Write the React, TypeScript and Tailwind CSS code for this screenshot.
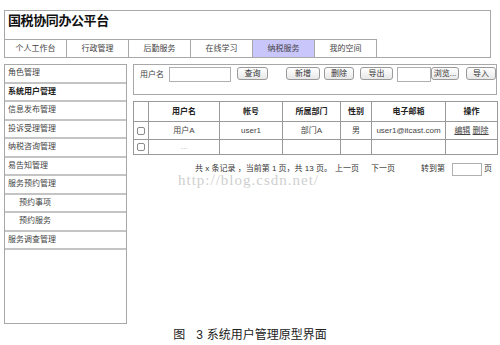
import React from "react";

const tabs = ["个人工作台", "行政管理", "后勤服务", "在线学习", "纳税服务", "我的空间"];
const side: { t: string; indent?: boolean; bold?: boolean }[] = [
  { t: "角色管理" },
  { t: "系统用户管理", bold: true },
  { t: "信息发布管理" },
  { t: "投诉受理管理" },
  { t: "纳税咨询管理" },
  { t: "易告知管理" },
  { t: "服务预约管理" },
  { t: "预约事项", indent: true },
  { t: "预约服务", indent: true },
  { t: "服务调查管理" },
];

function Btn({ children, w }: { children: React.ReactNode; w: string }) {
  return (
    <div
      className={`${w} h-[13px] flex items-center justify-center rounded-[3px] border border-[#9a9a9a] bg-gradient-to-b from-white to-[#e8e8e8] text-[8px] leading-none text-[#333]`}
    >
      {children}
    </div>
  );
}

function Check() {
  return <div className="ml-[3px] w-[8px] h-[8px] rounded-[2px] border border-[#8a8a8a] bg-white" />;
}

export default function App() {
  return (
    <div
      className="relative w-[500px] h-[345px] bg-white text-[#333] overflow-hidden"
      style={{ fontFamily: '"Liberation Sans", "Noto Sans CJK SC", sans-serif' }}
    >
      {/* header */}
      <div className="ml-[4px] mt-[10px] w-[487px] h-[48px] border border-[#a8a8a8] flex flex-col justify-between">
        <div className="pl-[3px] pt-[1px] text-[13px] font-bold leading-[18px] text-[#111] tracking-[-0.4px]">
          国税协同办公平台
        </div>
        <div className="flex">
          {tabs.map((t, i) => (
            <div
              key={t}
              className={`w-[62px] h-[18px] border-t border-r border-[#a8a8a8] flex items-center justify-center text-[8px] text-[#444] ${
                i === 4 ? "bg-[#c9c6fb]" : "bg-white"
              }`}
            >
              {t}
            </div>
          ))}
        </div>
      </div>

      {/* main */}
      <div className="flex items-start mt-[6px] ml-[4px] gap-[6px]">
        {/* sidebar */}
        <div className="w-[123px] h-[260px] border border-[#a8a8a8] flex flex-col">
          {side.map((s) => (
            <div
              key={s.t}
              className={`h-[18.5px] flex items-center border-b-2 border-[#c4c4c4] text-[8px] ${
                s.indent ? "pl-[14px]" : "pl-[3px]"
              } ${s.bold ? "font-bold text-[#222]" : "text-[#444]"}`}
            >
              {s.t}
            </div>
          ))}
        </div>

        {/* right */}
        <div className="w-[364px]">
          <div className="h-[31px] border border-[#a8a8a8] flex items-start pt-[2px] pl-[6px] text-[8px]">
            <div className="h-[15px] flex items-center text-[#444]">用户名</div>
            <div className="ml-[5px] w-[62px] h-[15px] border border-[#b0b0b0] bg-white" />
            <div className="ml-[6px]">
              <Btn w="w-[31px]">查询</Btn>
            </div>
            <div className="ml-[18px]">
              <Btn w="w-[34px]">新增</Btn>
            </div>
            <div className="ml-[4px]">
              <Btn w="w-[30px]">删除</Btn>
            </div>
            <div className="ml-[6px]">
              <Btn w="w-[33px]">导出</Btn>
            </div>
            <div className="ml-[4px] flex">
              <div className="w-[34px] h-[15px] border border-[#b0b0b0] bg-white" />
              <Btn w="w-[28px]">浏览...</Btn>
            </div>
            <div className="ml-[7px]">
              <Btn w="w-[30px]">导入</Btn>
            </div>
          </div>

          <table className="mt-[6px] w-[364px] table-fixed border-collapse text-[8px] text-[#444]">
            <colgroup>
              <col className="w-[15px]" />
              <col className="w-[71px]" />
              <col className="w-[63px]" />
              <col className="w-[58px]" />
              <col className="w-[31px]" />
              <col className="w-[74px]" />
              <col className="w-[52px]" />
            </colgroup>
            <thead>
              <tr className="h-[20px] font-bold text-[#222]">
                <th className="border border-[#999]"></th>
                <th className="border border-[#999]">用户名</th>
                <th className="border border-[#999]">帐号</th>
                <th className="border border-[#999]">所属部门</th>
                <th className="border border-[#999]">性别</th>
                <th className="border border-[#999]">电子邮箱</th>
                <th className="border border-[#999]">操作</th>
              </tr>
            </thead>
            <tbody>
              <tr className="h-[18px] text-center">
                <td className="border border-[#999] p-0">
                  <Check />
                </td>
                <td className="border border-[#999]">用户A</td>
                <td className="border border-[#999]">user1</td>
                <td className="border border-[#999]">部门A</td>
                <td className="border border-[#999]">男</td>
                <td className="border border-[#999] whitespace-nowrap">user1@itcast.com</td>
                <td className="border border-[#999]">
                  <span className="underline">编辑</span> <span className="underline">删除</span>
                </td>
              </tr>
              <tr className="h-[15px] text-center">
                <td className="border border-[#999] p-0">
                  <Check />
                </td>
                <td className="border border-[#999] text-[#aaa] leading-none">...</td>
                <td className="border border-[#999]"></td>
                <td className="border border-[#999]"></td>
                <td className="border border-[#999]"></td>
                <td className="border border-[#999]"></td>
                <td className="border border-[#999]"></td>
              </tr>
            </tbody>
          </table>

          <div className="mt-[7px] pl-[62px] flex items-center text-[8px] text-[#333] h-[14px] whitespace-nowrap">
            <span>共 x 条记录 ，当前第 1 页，共 13 页。</span>
            <span className="ml-[3px]">上一页</span>
            <span className="ml-[12px]">下一页</span>
            <span className="ml-[26px]">转到第</span>
            <div className="ml-[7px] w-[30px] h-[13px] border border-[#b0b0b0] bg-white" />
            <span className="ml-[2px]">页</span>
          </div>
        </div>
      </div>

      <div className="mt-[4px] text-center text-[12px] leading-[14px] text-[#222]">
        图<span className="ml-[11px]">3</span>
        <span className="ml-[4px]">系统用户管理原型界面</span>
      </div>

      {/* watermark */}
      <div
        className="absolute left-[178px] top-[172px] text-[15px] leading-[16px] tracking-[1px] text-[#cfcfcf] pointer-events-none"
        style={{ fontFamily: '"Liberation Serif", serif' }}
      >
        http://blog.csdn.net/
      </div>
    </div>
  );
}
